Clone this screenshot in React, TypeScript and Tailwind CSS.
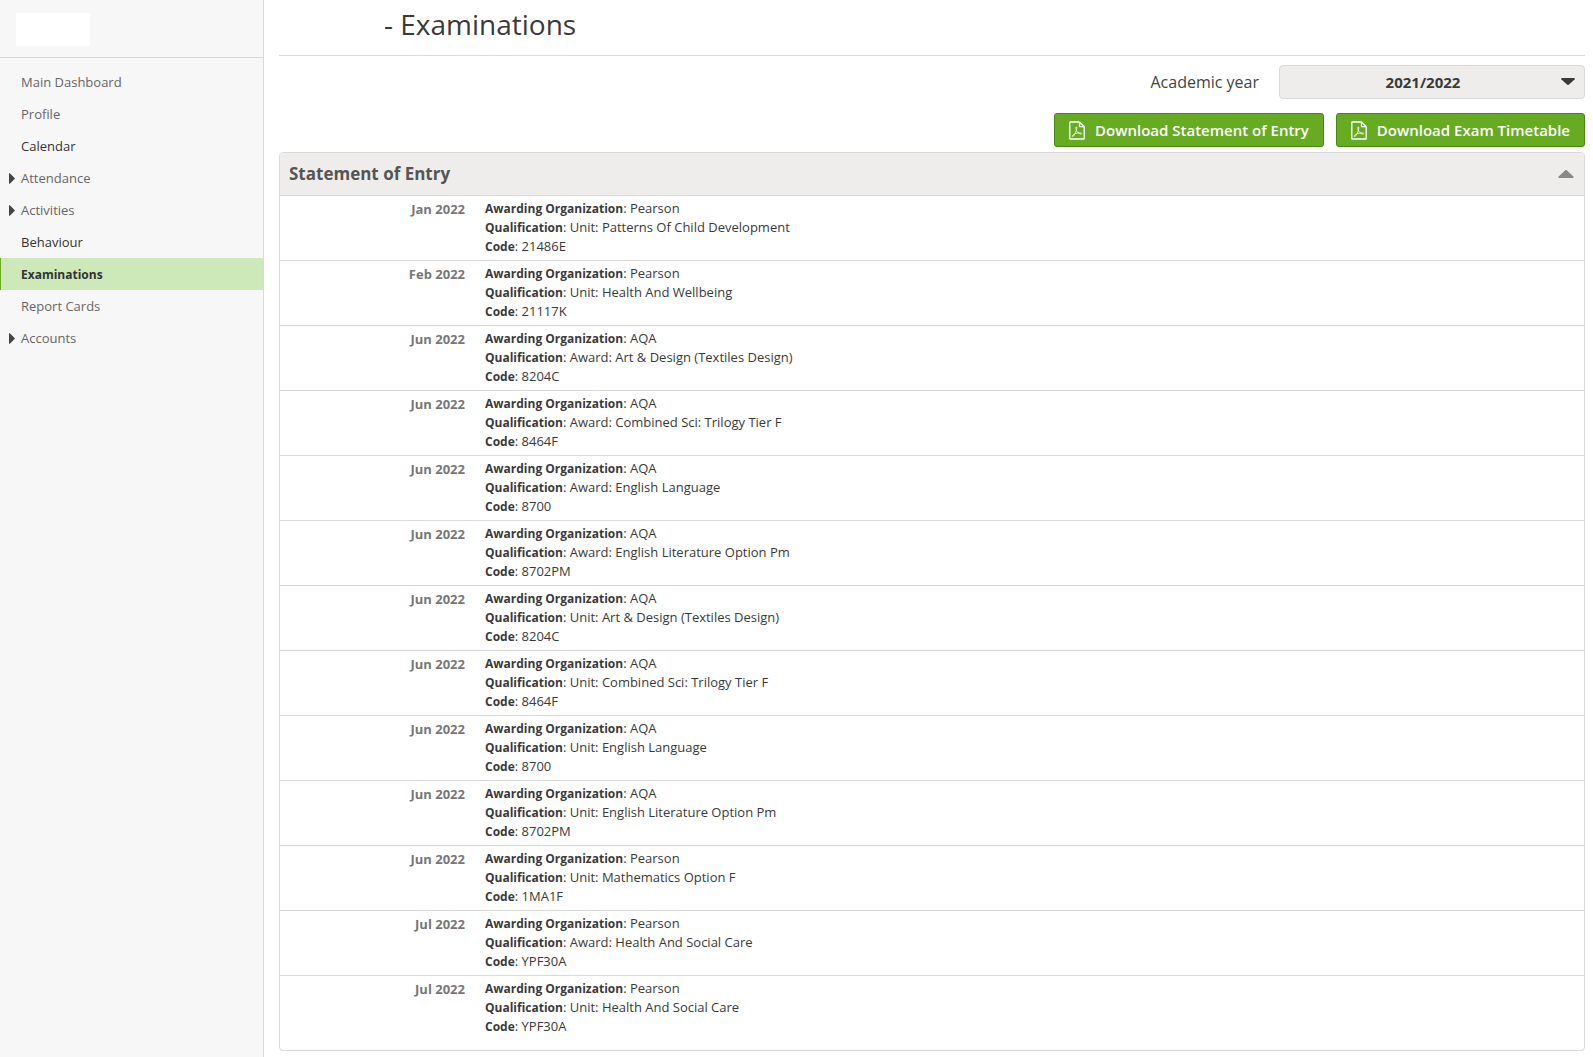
import { useState } from "react";

type NavItem = { label: string; expandable?: boolean; dark?: boolean; active?: boolean };

const navItems: NavItem[] = [
  { label: "Main Dashboard" },
  { label: "Profile" },
  { label: "Calendar", dark: true },
  { label: "Attendance", expandable: true },
  { label: "Activities", expandable: true },
  { label: "Behaviour", dark: true },
  { label: "Examinations", active: true },
  { label: "Report Cards" },
  { label: "Accounts", expandable: true },
];

const entries = [
  { date: "Jan 2022", org: "Pearson", qualification: "Unit: Patterns Of Child Development", code: "21486E" },
  { date: "Feb 2022", org: "Pearson", qualification: "Unit: Health And Wellbeing", code: "21117K" },
  { date: "Jun 2022", org: "AQA", qualification: "Award: Art & Design (Textiles Design)", code: "8204C" },
  { date: "Jun 2022", org: "AQA", qualification: "Award: Combined Sci: Trilogy Tier F", code: "8464F" },
  { date: "Jun 2022", org: "AQA", qualification: "Award: English Language", code: "8700" },
  { date: "Jun 2022", org: "AQA", qualification: "Award: English Literature Option Pm", code: "8702PM" },
  { date: "Jun 2022", org: "AQA", qualification: "Unit: Art & Design (Textiles Design)", code: "8204C" },
  { date: "Jun 2022", org: "AQA", qualification: "Unit: Combined Sci: Trilogy Tier F", code: "8464F" },
  { date: "Jun 2022", org: "AQA", qualification: "Unit: English Language", code: "8700" },
  { date: "Jun 2022", org: "AQA", qualification: "Unit: English Literature Option Pm", code: "8702PM" },
  { date: "Jun 2022", org: "Pearson", qualification: "Unit: Mathematics Option F", code: "1MA1F" },
  { date: "Jul 2022", org: "Pearson", qualification: "Award: Health And Social Care", code: "YPF30A" },
  { date: "Jul 2022", org: "Pearson", qualification: "Unit: Health And Social Care", code: "YPF30A" },
];

function PdfIcon() {
  return (
    <svg
      className="h-[19px] w-4 shrink-0"
      viewBox="0 0 16 19"
      fill="none"
      stroke="currentColor"
      strokeWidth="1.3"
      strokeLinejoin="round"
      aria-hidden="true"
    >
      <path d="M10.5 1H1.4a.6.6 0 0 0-.6.6v15.8c0 .3.3.6.6.6h13.2c.3 0 .6-.3.6-.6V5.600L10.500 1v4.600h4.700" />
      <path
        strokeWidth="0.8"
        d="M3.200 15.200c.5-1.300 2-2.200 3.600-2.700 1.800-.6 4-.8 5.200-.4 1 .4.700 1.100-.2 1-2-.2-4.300-2.300-4.800-4.800-.3-1.400-.1-2.500.3-2.500.7 0 .6 1.700.1 3.200-.6 2-1.900 5-3.100 6.200-.5.500-1.100.5-1.100 0Z"
      />
    </svg>
  );
}

function DownloadButton({ label }: { label: string }) {
  return (
    <button
      type="button"
      className="flex h-[34px] items-center gap-[10px] rounded-[3px] border border-[#4a8616] bg-[#67ab23] px-[14px] text-[15px] font-semibold text-white"
    >
      <PdfIcon />
      {label}
    </button>
  );
}

function Field({ name, value }: { name: string; value: string }) {
  return (
    <p>
      <strong className="text-xs leading-none font-bold">{name}</strong>: {value}
    </p>
  );
}

function Sidebar() {
  return (
    <aside className="w-[264px] shrink-0 border-r border-[#d9d9d9] bg-[#f8f7f8]">
      <div className="border-b border-[#d9d9d9] px-4 pt-[13px] pb-[11px]">
        <div className="h-[33px] w-[74px] bg-white" />
      </div>
      <nav className="pt-2">
        <ul>
          {navItems.map((item) => (
            <li key={item.label}>
              <a
                href="#"
                aria-current={item.active ? "page" : undefined}
                className={`flex h-8 items-center border-l pt-px pr-4 pl-2 ${
                  item.active
                    ? "border-[#67ab23] bg-[#cde8b9] text-xs font-bold text-[#333333]"
                    : item.dark
                      ? "border-transparent text-[13px] text-[#333333]"
                      : "border-transparent text-[13px] text-[#666666]"
                }`}
              >
                <span className="w-3 text-[#444444]">
                  {item.expandable && (
                    <svg className="h-[11px] w-[6px]" viewBox="0 0 6 11" fill="currentColor" aria-hidden="true">
                      <path d="M0 .6C0 .1.500 0 .8.3l4.800 4.700c.3.300.3.700 0 1L.8 10.700c-.3.300-.8.200-.8-.3Z" />
                    </svg>
                  )}
                </span>
                {item.label}
              </a>
            </li>
          ))}
        </ul>
      </nav>
    </aside>
  );
}

export default function App() {
  const [year, setYear] = useState("2021/2022");
  const [open, setOpen] = useState(true);

  return (
    <div className="flex min-h-screen bg-white font-['Open_Sans','Noto_Sans',sans-serif] text-[#3a3a3a]">
      <Sidebar />

      <main className="min-w-0 flex-1 pr-2 pl-[15px]">
        <header className="border-b border-[#d9d9d9] pt-1 pb-[11px] pl-[105px]">
          <h1 className="text-[28px] leading-10">- Examinations</h1>
        </header>

        <div className="flex items-center justify-end gap-5 pt-[9px]">
          <label htmlFor="academic-year" className="text-base text-[#444444]">
            Academic year
          </label>
          <div className="relative w-[306px]">
            <select
              id="academic-year"
              value={year}
              onChange={(e) => setYear(e.target.value)}
              className="h-[34px] w-full appearance-none rounded-[4px] border border-[#d9d9d9] bg-[#eeedec] pr-9 pl-[18px] text-center text-[15px] font-bold [text-align-last:center]"
            >
              <option>2021/2022</option>
              <option>2020/2021</option>
            </select>
            <svg
              className="pointer-events-none absolute top-[13px] right-[10px] h-[7px] w-[14px]"
              viewBox="0 0 14 7"
              fill="currentColor"
              aria-hidden="true"
            >
              <path d="M1 0h12c.8 0 1.200.8.6 1.400L8 6.600c-.6.500-1.400.500-2 0L.4 1.400C-.2.800.200 0 1 0Z" />
            </svg>
          </div>
        </div>

        <div className="flex justify-end gap-3 pt-[14px] pb-[5px]">
          <DownloadButton label="Download Statement of Entry" />
          <DownloadButton label="Download Exam Timetable" />
        </div>

        <section className="rounded-[4px] border border-[#d9d9d9]">
          <h2 className="text-[17px] font-bold text-[#555555]">
            <button
              type="button"
              aria-expanded={open}
              onClick={() => setOpen(!open)}
              className="flex h-[42px] w-full items-center justify-between rounded-t-[3px] bg-[#eeedec] pr-[10px] pl-[9px]"
            >
              Statement of Entry
              <svg className="h-2 w-4 text-[#888888]" viewBox="0 0 16 8" fill="currentColor" aria-hidden="true">
                <path d="M1.200 8h13.600c.9 0 1.200-.8.600-1.400L9 .5c-.6-.6-1.400-.6-2 0L.6 6.600C0 7.200.3 8 1.200 8Z" />
              </svg>
            </button>
          </h2>
          {open && (
            <ul className="pb-[10px]">
              {entries.map((entry, i) => (
                <li key={i} className="flex gap-5 border-t border-[#d9d9d9] pt-[3px] pb-1 text-[13px] leading-[19px]">
                  <span className="w-[185px] shrink-0 pt-px text-right font-bold text-[#777777]">{entry.date}</span>
                  <div>
                    <Field name="Awarding Organization" value={entry.org} />
                    <Field name="Qualification" value={entry.qualification} />
                    <Field name="Code" value={entry.code} />
                  </div>
                </li>
              ))}
            </ul>
          )}
        </section>
      </main>
    </div>
  );
}
